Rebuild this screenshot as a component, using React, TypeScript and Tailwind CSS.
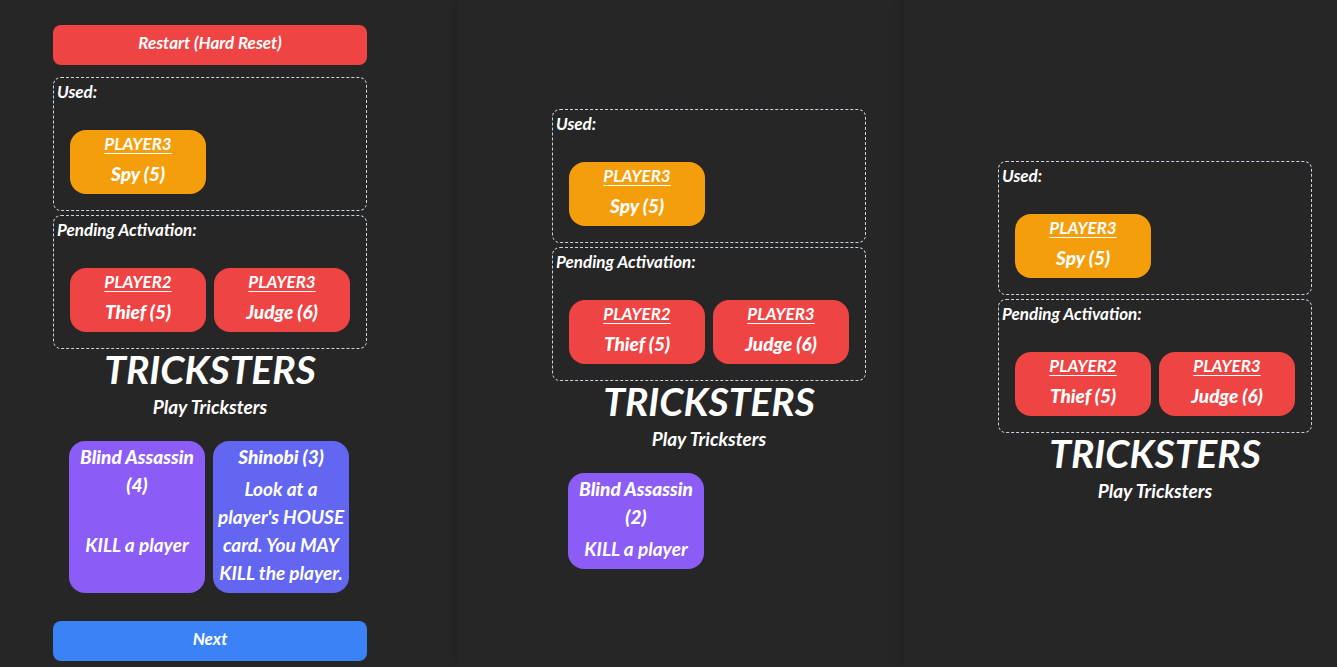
type CardData = {
  title: string;
  color: string;
  player?: string;
  description?: string;
};

const used: CardData[] = [{ player: "PLAYER3", title: "Spy (5)", color: "bg-[#f59e0b]" }];

const pending: CardData[] = [
  { player: "PLAYER2", title: "Thief (5)", color: "bg-[#ef4444]" },
  { player: "PLAYER3", title: "Judge (6)", color: "bg-[#ef4444]" },
];

function Card({ card }: { card: CardData }) {
  return (
    <li className={`flex w-34 flex-col gap-1 rounded-2xl px-1 pt-0.5 pb-1.5 text-center ${card.color}`}>
      {card.player && (
        <p className="text-[17px] leading-6 underline underline-offset-3">{card.player}</p>
      )}
      <h3 className="text-[19px] leading-7 font-black">{card.title}</h3>
      {card.description && (
        <p className="flex grow items-center justify-center text-[19px] leading-7">{card.description}</p>
      )}
    </li>
  );
}

function Zone({ label, cards }: { label: string; cards: CardData[] }) {
  return (
    <section className="rounded-lg border border-dashed border-[#cbd5e1]">
      <h2 className="px-[3px] pt-0.5 pb-2.5 text-[17px] leading-6">{label}</h2>
      <ul className="flex flex-wrap gap-2 p-4">
        {cards.map((card) => (
          <Card key={card.title} card={card} />
        ))}
      </ul>
    </section>
  );
}

function Board({ hand }: { hand: CardData[] }) {
  return (
    <>
      <div className="flex flex-col gap-1">
        <Zone label="Used:" cards={used} />
        <Zone label="Pending Activation:" cards={pending} />
      </div>
      <header className="text-center">
        <h1 className="text-[39px] leading-10 font-bold">TRICKSTERS</h1>
        <p className="mt-1.5 text-[19px] leading-6">Play Tricksters</p>
      </header>
      <ul className="mt-1.5 flex flex-wrap gap-2 p-4">
        {hand.map((card) => (
          <Card key={card.title} card={card} />
        ))}
      </ul>
    </>
  );
}

export default function App() {
  return (
    <main className="grid min-h-screen grid-cols-[458fr_446fr_433fr] overflow-hidden bg-[#262626] font-['Lato',sans-serif] font-bold text-white italic">
      <div className="flex flex-col pt-[25px] pr-[91px] pb-1.5 pl-[53px]">
        <button type="button" className="mb-3 h-10 rounded-lg bg-[#ef4444] pb-1 text-[17px]">
          Restart (Hard Reset)
        </button>
        <Board
          hand={[
            { title: "Blind Assassin (4)", description: "KILL a player", color: "bg-[#8b5cf6]" },
            {
              title: "Shinobi (3)",
              description: "Look at a player's HOUSE card. You MAY KILL the player.",
              color: "bg-[#6366f1]",
            },
          ]}
        />
        <button type="button" className="mt-3 h-10 rounded-lg bg-[#3b82f6] pb-1 text-[17px]">
          Next
        </button>
      </div>
      <div className="flex flex-col bg-[#262626] pt-[109px] pr-[38px] pl-[94px] shadow-[0_0_12px_rgba(0,0,0,0.2)]">
        <Board hand={[{ title: "Blind Assassin (2)", description: "KILL a player", color: "bg-[#8b5cf6]" }]} />
      </div>
      <div className="flex flex-col bg-[#262626] pt-[161px] pr-[25px] pl-[94px] shadow-[0_0_12px_rgba(0,0,0,0.2)]">
        <Board hand={[]} />
      </div>
    </main>
  );
}
